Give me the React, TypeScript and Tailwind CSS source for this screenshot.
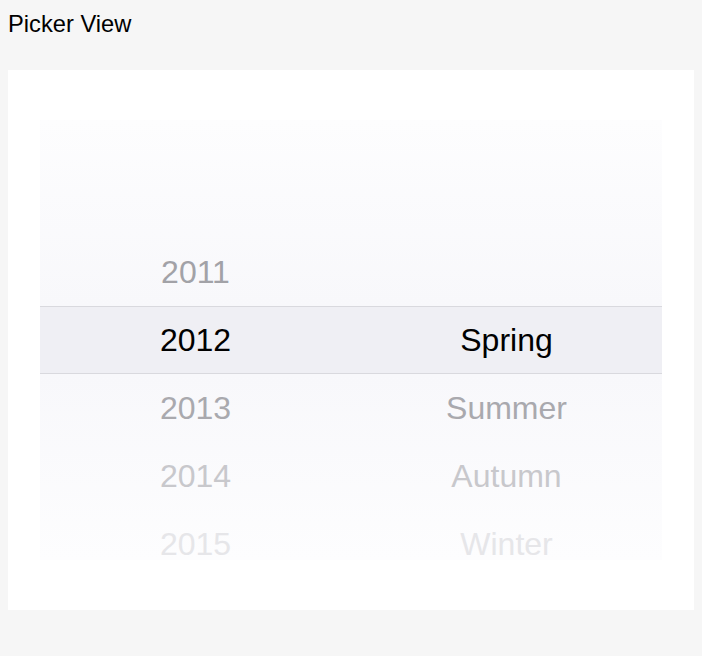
const years = [
  { label: "2011", color: "text-[#a2a2a7]" },
  { label: "2012", color: "text-black" },
  { label: "2013", color: "text-[#a9a9ae]" },
  { label: "2014", color: "text-[#c8c8cc]" },
  { label: "2015", color: "text-[#e6e6e9]" },
];

const seasons = [
  { label: "Spring", color: "text-black" },
  { label: "Summer", color: "text-[#a9a9ae]" },
  { label: "Autumn", color: "text-[#c8c8cc]" },
  { label: "Winter", color: "text-[#e6e6e9]" },
];

function Column({
  items,
  offset,
}: {
  items: { label: string; color: string }[];
  offset: number;
}) {
  return (
    <div className="flex flex-1 flex-col pt-[118px]">
      {offset > 0 && <div className="h-[68px]" />}
      {items.map((item) => (
        <div
          key={item.label}
          className={`flex h-[68px] items-center justify-center text-[32px] ${item.color}`}
        >
          {item.label}
        </div>
      ))}
    </div>
  );
}

export default function App() {
  return (
    <div className="min-h-screen bg-[#f6f6f6] px-2 pt-[10px] font-['Liberation_Sans',Arial,sans-serif]">
      <div className="text-[23.7px] leading-[28px] text-black">Picker View</div>

      <div className="mt-[32px] bg-white px-8 pb-[50px] pt-[50px]">
        <div className="relative h-[440px] overflow-hidden bg-[linear-gradient(to_bottom,#fdfdfe,#f8f8fb_42%,#f8f8fb_58%,#fdfdfe)]">
          <div className="absolute inset-x-0 top-[186px] h-[68px] border-y border-[#d9d9de] bg-[#efeff4]" />
          <div className="relative flex">
            <Column items={years} offset={0} />
            <Column items={seasons} offset={1} />
          </div>
        </div>
      </div>
    </div>
  );
}
